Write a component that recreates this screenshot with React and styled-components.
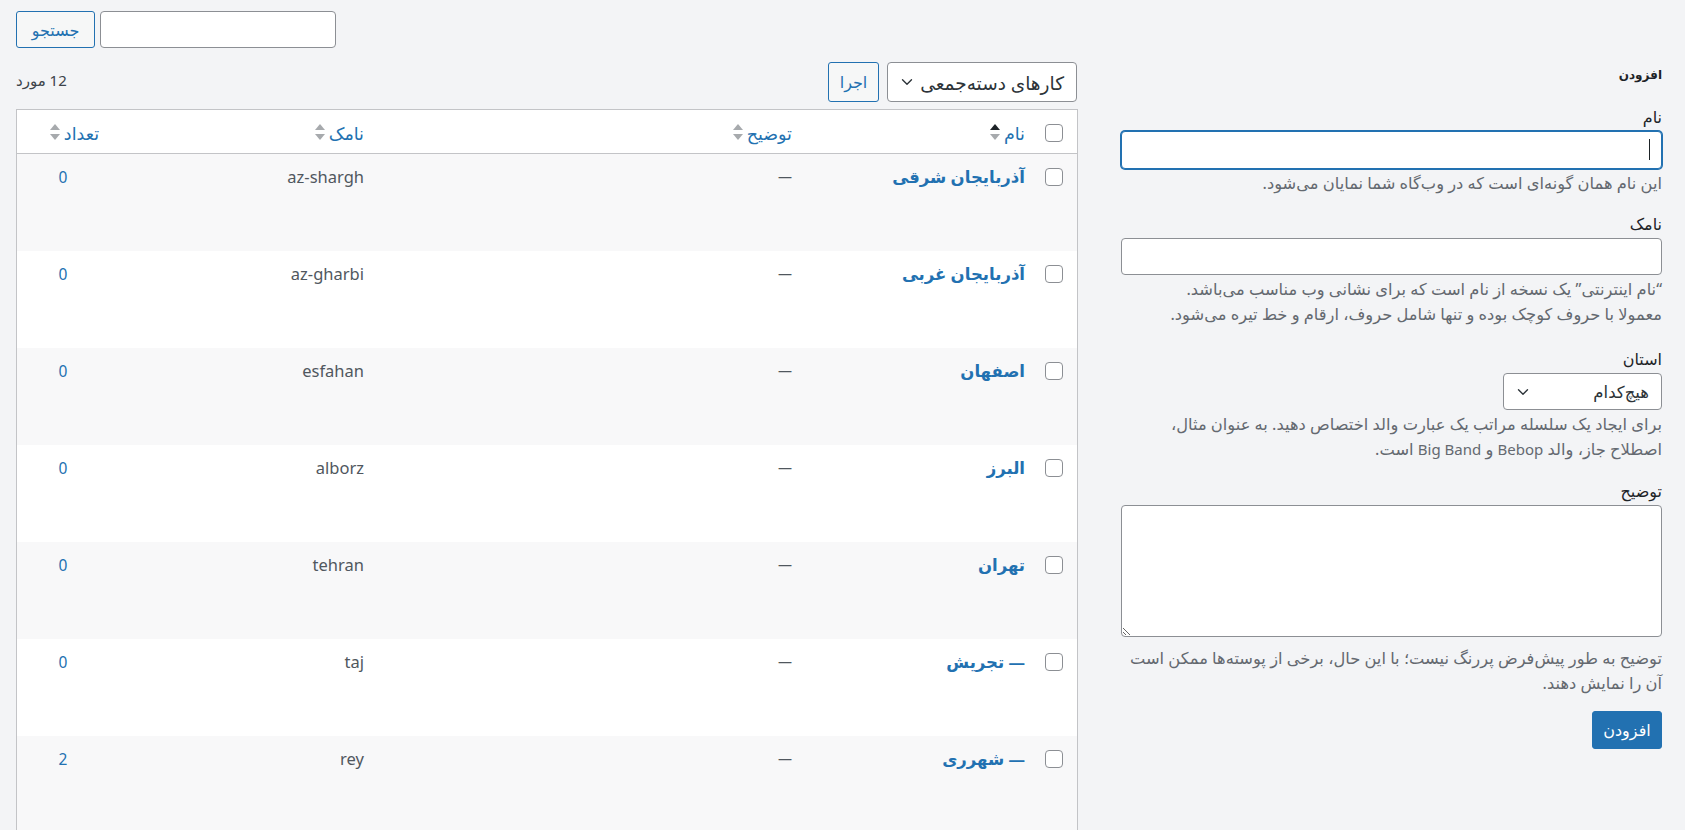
import React from "react";
import styled, { createGlobalStyle } from "styled-components";
import { ChevronDown } from "lucide-react";

const GlobalStyle = createGlobalStyle`
  body {
    margin: 0;
    background: #f3f4f6;
    direction: rtl;
    font-family: "Noto Sans", "DejaVu Sans", sans-serif;
    font-size: 13px;
    color: #3c434a;
  }
  * { box-sizing: border-box; }
`;

const rows = [
  { name: "آذربایجان شرقی", slug: "az-shargh", count: 0 },
  { name: "آذربایجان غربی", slug: "az-gharbi", count: 0 },
  { name: "اصفهان", slug: "esfahan", count: 0 },
  { name: "البرز", slug: "alborz", count: 0 },
  { name: "تهران", slug: "tehran", count: 0 },
  { name: "— تجریش", slug: "taj", count: 0 },
  { name: "— شهرری", slug: "rey", count: 2 },
];

const Page = styled.div`
  padding: 11px 23px 0 16px;
`;

const SearchRow = styled.div`
  display: flex;
  justify-content: flex-end;
  gap: 5px;
  height: 37px;
`;

const TextInput = styled.input`
  display: block;
  width: ${(p) => p.width || "100%"};
  height: ${(p) => p.height || 36}px;
  border: 1px solid #8c8f94;
  border-radius: 4px;
  background: #fff;
  padding: 0 10px;
  font: inherit;
  outline: none;
  ${(p) =>
    p.focused &&
    `
    border-color: #2271b1;
    box-shadow: 0 0 0 1px #2271b1;
  `}
`;

const SecondaryButton = styled.button`
  width: ${(p) => p.width}px;
  height: ${(p) => p.height || 36}px;
  padding: 0;
  border: 1px solid #2271b1;
  border-radius: 3px;
  background: #f6f7f7;
  color: #2271b1;
  font: inherit;
  font-size: 16px;
`;

const Columns = styled.div`
  display: flex;
  gap: 43px;
  margin-top: 14px;
  align-items: flex-start;
`;

const FormCol = styled.div`
  flex: none;
  width: 541px;
`;

const ListCol = styled.div`
  flex: 1;
  min-width: 0;
`;

const Heading = styled.h2`
  margin: 2px 0 21px;
  font-size: 12px;
  line-height: 22px;
  font-weight: 700;
  color: #1d2327;
`;

const Field = styled.div`
  margin-bottom: ${(p) => p.mb ?? 20}px;
`;

const Label = styled.label`
  display: block;
  line-height: 20px;
  margin-bottom: 4px;
  color: #1d2327;
  font-size: 16px;
`;

const Help = styled.p`
  margin: ${(p) => p.mt ?? 2}px 0 0;
  line-height: 25px;
  color: #646970;
  font-size: 16.3px;
`;

const Latin = styled.span`
  font-size: 15px;
`;

const InputWrap = styled.div`
  position: relative;
`;

const Caret = styled.span`
  position: absolute;
  right: 12px;
  top: 8px;
  width: 1px;
  height: 21px;
  background: #1d2327;
`;

const SelectBox = styled.div`
  display: flex;
  align-items: center;
  justify-content: space-between;
  width: ${(p) => p.width}px;
  height: ${(p) => p.height}px;
  padding: 0 ${(p) => p.padR || 12}px 0 ${(p) => p.padL || 10}px;
  border: 1px solid #8c8f94;
  border-radius: 4px;
  background: #fff;
  color: #2c3338;
  font-size: ${(p) => p.fs || 14}px;
`;

const TextArea = styled.textarea`
  display: block;
  width: 100%;
  height: 132px;
  border: 1px solid #8c8f94;
  border-radius: 4px;
  background: #fff;
  font: inherit;
  resize: vertical;
  outline: none;
`;

const PrimaryButton = styled.button`
  width: 70px;
  height: 38px;
  padding: 0;
  border: 1px solid #2271b1;
  border-radius: 3px;
  background: #2271b1;
  color: #fff;
  font: inherit;
  font-size: 16px;
`;

const TableNav = styled.div`
  display: flex;
  align-items: center;
  justify-content: space-between;
  height: 40px;
  margin-bottom: 7px;
`;

const BulkGroup = styled.div`
  display: flex;
  gap: 8px;
  margin-right: 1px;
`;

const ItemCount = styled.span`
  font-size: 15px;
  color: #3c434a;
  margin-bottom: 4px;
`;

const Table = styled.div`
  border: 1px solid #c3c4c7;
  background: #fff;
`;

const Row = styled.div`
  display: grid;
  grid-template-columns: 42px 233px 428px 265px 1fr;
  height: ${(p) => (p.head ? 44 : 97)}px;
  background: ${(p) => (p.striped ? "#f8f8f9" : "#fff")};
  border-bottom: ${(p) => (p.head ? "1px solid #c3c4c7" : "none")};
`;

const Cell = styled.div`
  padding: 12px 10px 0;
  line-height: 22px;
  height: 22px;
  box-sizing: content-box;
  font-size: ${(p) => p.fs || 15.5}px;
  text-align: ${(p) => p.align || "right"};
  color: ${(p) => p.color || "#50575e"};
  display: ${(p) => (p.head ? "flex" : "block")};
  align-items: center;
  gap: 4px;
`;

const CheckCell = styled.div`
  padding: 14px 14px 0 0;
`;

const CheckBox = styled.span`
  display: block;
  width: 18px;
  height: 18px;
  border: 1px solid #8c8f94;
  border-radius: 4px;
  background: #fff;
`;

const HeadLink = styled.span`
  color: #2271b1;
  font-size: 17.5px;
`;

const NameLink = styled.span`
  color: #2271b1;
  font-weight: 700;
  font-size: 16.5px;
`;

const SortIcon = ({ active }) => (
  <svg width="10" height="18" viewBox="0 0 10 18">
    <path d="M0 6 L5 0 L10 6 Z" fill={active ? "#1d2327" : "#a7aaad"} />
    <path d="M0 10 L10 10 L5 16 Z" fill="#a7aaad" />
  </svg>
);

const HeadCell = ({ label, active }) => (
  <Cell head>
    <HeadLink>{label}</HeadLink>
    <SortIcon active={active} />
  </Cell>
);

export default function App() {
  return (
    <Page>
      <GlobalStyle />
      <SearchRow>
        <TextInput width="236px" height={37} />
        <SecondaryButton width={79} height={37}>
          جستجو
        </SecondaryButton>
      </SearchRow>

      <Columns>
        <FormCol>
          <Heading>افزودن</Heading>

          <Field mb={18}>
            <Label>نام</Label>
            <InputWrap>
              <TextInput height={38} focused />
              <Caret />
            </InputWrap>
            <Help>این نام همان گونه‌ای است که در وب‌گاه شما نمایان می‌شود.</Help>
          </Field>

          <Field mb={22}>
            <Label>نامک</Label>
            <TextInput height={37} />
            <Help>
              “نام اینترنتی” یک نسخه از نام است که برای نشانی وب مناسب می‌باشد.
              <br />
              معمولا با حروف کوچک بوده و تنها شامل حروف، ارقام و خط تیره می‌شود.
            </Help>
          </Field>

          <Field mb={19}>
            <Label>استان</Label>
            <SelectBox width={159} height={37} fs={16.5}>
              <span>هیچ‌کدام</span>
              <ChevronDown size={18} strokeWidth={1.8} color="#2c3338" />
            </SelectBox>
            <Help>
              برای ایجاد یک سلسله مراتب یک عبارت والد اختصاص دهید. به عنوان مثال،
              <br />
              اصطلاح جاز، والد <Latin>Bebop</Latin> و <Latin>Big Band</Latin> است.
            </Help>
          </Field>

          <Field mb={15}>
            <Label>توضیح</Label>
            <TextArea />
            <Help mt={9}>
              توضیح به طور پیش‌فرض پررنگ نیست؛ با این حال، برخی از پوسته‌ها ممکن است
              <br />
              آن را نمایش دهند.
            </Help>
          </Field>

          <PrimaryButton>افزودن</PrimaryButton>
        </FormCol>

        <ListCol>
          <TableNav>
            <BulkGroup>
              <SelectBox width={190} height={40} fs={18.5}>
                <span>کارهای دسته‌جمعی</span>
                <ChevronDown size={18} strokeWidth={1.8} color="#2c3338" />
              </SelectBox>
              <SecondaryButton width={51} height={40}>
                اجرا
              </SecondaryButton>
            </BulkGroup>
            <ItemCount>12 مورد</ItemCount>
          </TableNav>

          <Table>
            <Row head>
              <CheckCell>
                <CheckBox />
              </CheckCell>
              <HeadCell label="نام" active />
              <HeadCell label="توضیح" />
              <HeadCell label="نامک" />
              <HeadCell label="تعداد" />
            </Row>
            {rows.map((r, i) => (
              <Row key={r.slug} striped={i % 2 === 0}>
                <CheckCell>
                  <CheckBox />
                </CheckCell>
                <Cell>
                  <NameLink>{r.name}</NameLink>
                </Cell>
                <Cell fs={14}>—</Cell>
                <Cell fs={16.5}>{r.slug}</Cell>
                <Cell align="center" color="#2271b1">
                  {r.count}
                </Cell>
              </Row>
            ))}
          </Table>
        </ListCol>
      </Columns>
    </Page>
  );
}
